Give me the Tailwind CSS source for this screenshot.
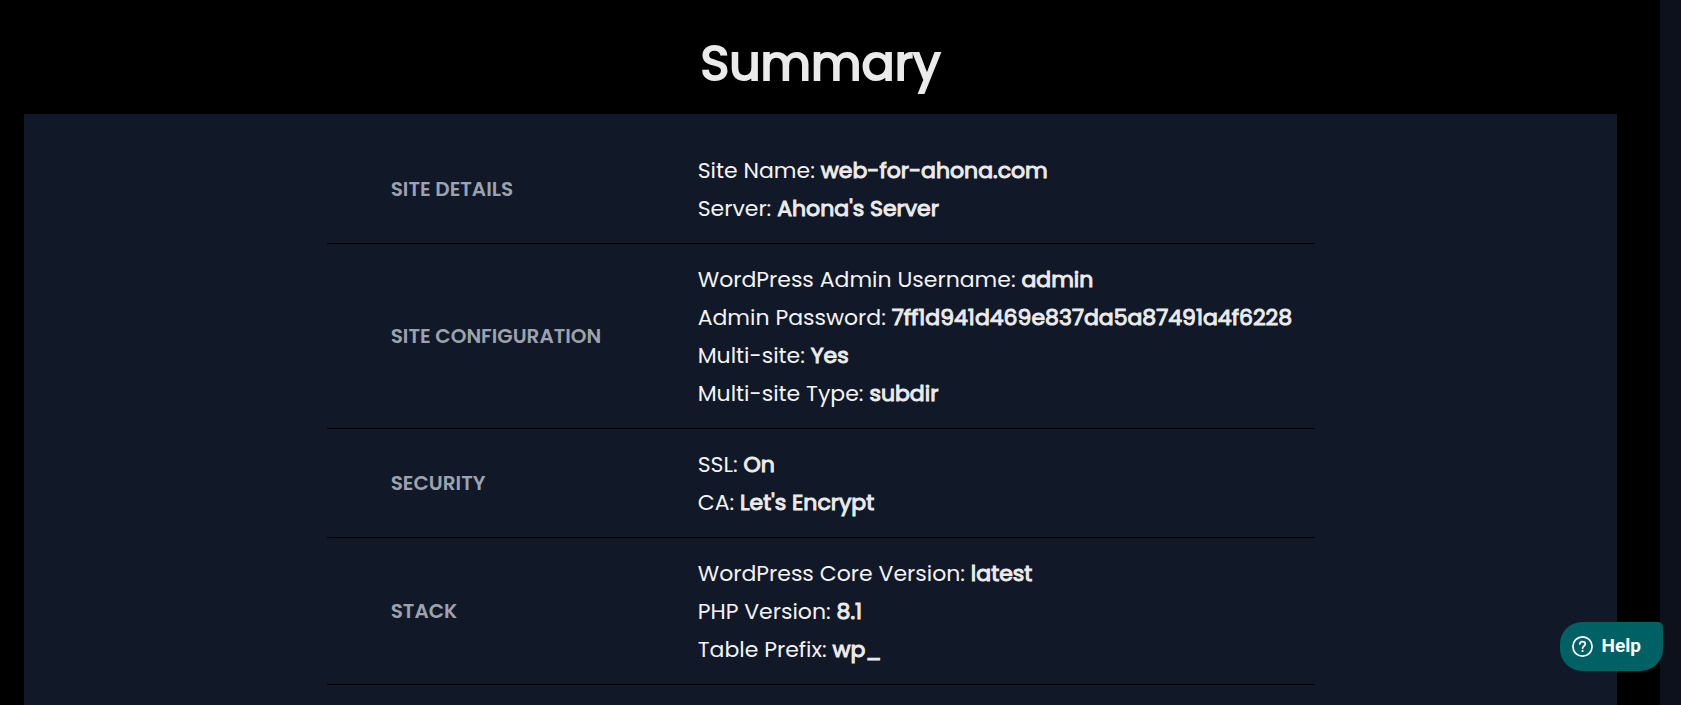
<!DOCTYPE html>
<html lang="en">
<head>
<meta charset="utf-8">
<meta name="viewport" content="width=device-width, initial-scale=1">
<title>Summary</title>
<script src="https://cdn.jsdelivr.net/npm/@tailwindcss/browser@4"></script>
</head>
<body class="min-h-screen bg-[#0d111b] pr-[21px] font-[Poppins,Inter,sans-serif] text-[#f3f4f6]">
<main class="flex min-h-screen flex-col bg-black pl-6 pr-[43px]">
  <h1 class="pt-[31px] pb-[19px] text-center text-[49px] leading-[64px] font-normal text-[#ebebeb] [-webkit-text-stroke:2px_#ebebeb]">Summary</h1>
  <section class="flex-1 bg-[#111827] pt-[21px]">
    <table class="mx-auto w-[62%] border-collapse text-left text-[22px] leading-[38px] whitespace-nowrap">
      <tbody>
        <tr class="border-b border-black">
          <th scope="row" class="w-[307px] py-4 pl-16 text-[20px] font-semibold text-[#9ca3af]">SITE DETAILS</th>
          <td class="pt-[17px] pb-[15px] pl-16"><p>Site Name: <strong class="font-normal text-[#ebebeb] [-webkit-text-stroke:1px_#ebebeb]">web-for-ahona.com</strong></p><p>Server: <strong class="font-normal text-[#ebebeb] [-webkit-text-stroke:1px_#ebebeb]">Ahona's Server</strong></p></td>
        </tr>
        <tr class="border-b border-black">
          <th scope="row" class="py-4 pl-16 text-[20px] font-semibold text-[#9ca3af]">SITE CONFIGURATION</th>
          <td class="pt-[17px] pb-[15px] pl-16"><p>WordPress Admin Username: <strong class="font-normal text-[#ebebeb] [-webkit-text-stroke:1px_#ebebeb]">admin</strong></p><p>Admin Password: <strong class="font-normal text-[#ebebeb] [-webkit-text-stroke:1px_#ebebeb]">7ff1d941d469e837da5a87491a4f6228</strong></p><p>Multi-site: <strong class="font-normal text-[#ebebeb] [-webkit-text-stroke:1px_#ebebeb]">Yes</strong></p><p>Multi-site Type: <strong class="font-normal text-[#ebebeb] [-webkit-text-stroke:1px_#ebebeb]">subdir</strong></p></td>
        </tr>
        <tr class="border-b border-black">
          <th scope="row" class="py-4 pl-16 text-[20px] font-semibold text-[#9ca3af]">SECURITY</th>
          <td class="pt-[17px] pb-[15px] pl-16"><p>SSL: <strong class="font-normal text-[#ebebeb] [-webkit-text-stroke:1px_#ebebeb]">On</strong></p><p>CA: <strong class="font-normal text-[#ebebeb] [-webkit-text-stroke:1px_#ebebeb]">Let's Encrypt</strong></p></td>
        </tr>
        <tr class="border-b border-black">
          <th scope="row" class="py-4 pl-16 text-[20px] font-semibold text-[#9ca3af]">STACK</th>
          <td class="pt-[17px] pb-[15px] pl-16"><p>WordPress Core Version: <strong class="font-normal text-[#ebebeb] [-webkit-text-stroke:1px_#ebebeb]">latest</strong></p><p>PHP Version: <strong class="font-normal text-[#ebebeb] [-webkit-text-stroke:1px_#ebebeb]">8.1</strong></p><p>Table Prefix: <strong class="font-normal text-[#ebebeb] [-webkit-text-stroke:1px_#ebebeb]">wp_</strong></p></td>
        </tr>
      </tbody>
    </table>
  </section>
</main>
<button type="button" class="fixed right-[18px] bottom-[34px] flex h-[49px] items-center gap-2 rounded-[22px] rounded-tr-[5px] bg-[#006164] pr-[22px] pl-3 font-[Roboto,sans-serif] text-[19px] font-bold text-white">
  <svg class="size-[21px]" viewBox="0 0 21 21" fill="none" stroke="currentColor" aria-hidden="true">
    <circle cx="10.5" cy="10.5" r="9.6" stroke-width="1.7"/>
    <path d="M7.8 8C7.8 6.5 9 5.7 10.5 5.7s2.8.9 2.8 2.4c0 1.9-2.7 2-2.7 4.2" stroke-width="1.7" stroke-linecap="round"/>
    <circle cx="10.6" cy="15" r="1.1" fill="currentColor" stroke="none"/>
  </svg>
  <span class="pl-px">Help</span>
</button>
</body>
</html>
